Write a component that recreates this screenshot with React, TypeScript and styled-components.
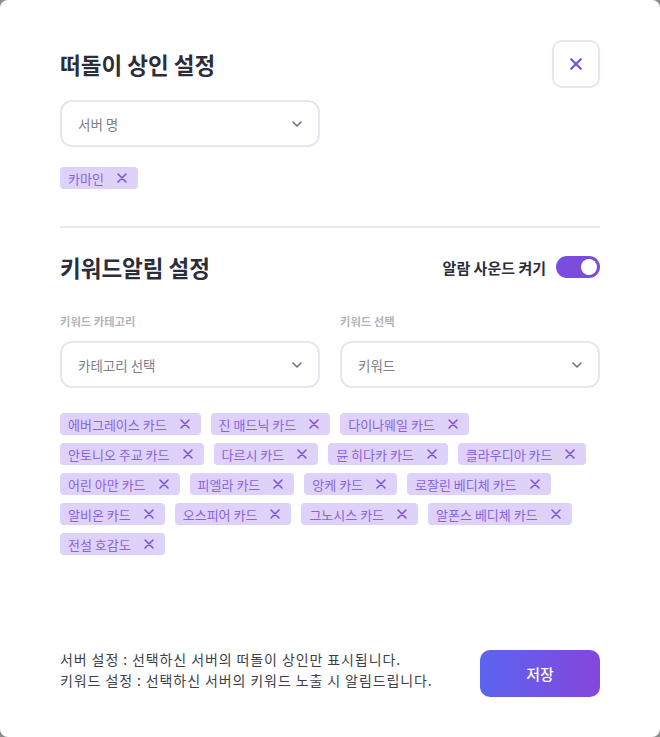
import styled, { createGlobalStyle } from "styled-components";

const GlobalStyle = createGlobalStyle`
  html, body {
    margin: 0;
    padding: 0;
    background: #8c8c8c;
  }
  * {
    box-sizing: border-box;
  }
  body {
    font-family: "Noto Sans CJK KR", "Noto Sans", sans-serif;
  }
`;

const Modal = styled.div`
  width: 660px;
  height: 737px;
  background: #fff;
  border-radius: 8px;
  padding: 40px 60px 40px 60px;
  display: flex;
  flex-direction: column;
`;

const HeaderRow = styled.div`
  display: flex;
  align-items: center;
  justify-content: space-between;
  height: 48px;
`;

const Title = styled.h2`
  margin: 0;
  font-size: 22.5px;
  font-weight: 700;
  color: #2b2d3a;
`;

const CloseButton = styled.button`
  width: 48px;
  height: 48px;
  border: 2px solid #e7e5ef;
  border-radius: 10px;
  background: #fff;
  display: flex;
  align-items: center;
  justify-content: center;
  padding: 0;
  cursor: pointer;
`;

const SelectBox = styled.div<{ $width?: string }>`
  width: ${(p) => p.$width || "100%"};
  height: 47px;
  border: 2px solid #e7e6ee;
  border-radius: 12px;
  display: flex;
  align-items: center;
  justify-content: space-between;
  padding: 0 16px 0 16px;
  font-size: 13.5px;
  color: #7d7f8a;
`;

const ChipList = styled.div<{ $top: number }>`
  display: flex;
  flex-wrap: wrap;
  gap: 8px 10px;
  margin-top: ${(p) => p.$top}px;
`;

const Chip = styled.span`
  display: inline-flex;
  align-items: center;
  height: 22px;
  padding: 0 11px 0 8px;
  border-radius: 4px;
  background: #ded2fa;
  color: #8a63dd;
  font-size: 13px;
  line-height: 1;
  gap: 13px;
`;

const Divider = styled.hr`
  border: none;
  height: 2px;
  background: #e9e8ee;
  margin: 37px 0 0 0;
`;

const SectionHeader = styled.div`
  display: flex;
  align-items: center;
  justify-content: space-between;
  margin-top: 23px;
`;

const ToggleWrap = styled.label`
  display: flex;
  align-items: center;
  gap: 10px;
  font-size: 15px;
  font-weight: 700;
  color: #2b2d3a;
`;

const Toggle = styled.span<{ $on: boolean }>`
  position: relative;
  width: 44px;
  height: 22px;
  border-radius: 11px;
  background: ${(p) => (p.$on ? "#7b4ddc" : "#d5d5dc")};

  &::after {
    content: "";
    position: absolute;
    top: 3px;
    left: ${(p) => (p.$on ? "25px" : "3px")};
    width: 16px;
    height: 16px;
    border-radius: 50%;
    background: #fff;
  }
`;

const FieldGrid = styled.div`
  display: grid;
  grid-template-columns: 1fr 1fr;
  gap: 20px;
  margin-top: 30px;
`;

const Field = styled.div`
  display: flex;
  flex-direction: column;
  gap: 12px;
`;

const FieldLabel = styled.span`
  font-size: 11.3px;
  font-weight: 700;
  color: #b3b4bc;
`;

const Footer = styled.div`
  margin-top: auto;
  display: flex;
  align-items: center;
  justify-content: space-between;
`;

const Notes = styled.div`
  font-size: 14px;
  letter-spacing: 0.9px;
  line-height: 21px;
  color: #3d3f4a;
  margin-top: -9px;
`;

const SaveButton = styled.button`
  width: 120px;
  height: 47px;
  border: none;
  border-radius: 10px;
  background: linear-gradient(90deg, #5b64f0 0%, #8546dc 100%);
  color: #fff;
  font-family: inherit;
  font-size: 15px;
  font-weight: 500;
  cursor: pointer;
  margin-top: -2px;
`;

const XIcon = ({ size = 10, width = 1.5 }: { size?: number; width?: number }) => (
  <svg width={size} height={size} viewBox="0 0 10 10" fill="none">
    <path
      d="M1 1L9 9M9 1L1 9"
      stroke="#7b4ddc"
      strokeWidth={width}
      strokeLinecap="round"
    />
  </svg>
);

const Chevron = () => (
  <svg width="10" height="6" viewBox="0 0 10 6" fill="none">
    <path
      d="M1 1L5 5L9 1"
      stroke="#6f7180"
      strokeWidth="1.6"
      strokeLinecap="round"
      strokeLinejoin="round"
    />
  </svg>
);

const keywords = [
  "에버그레이스 카드",
  "진 매드닉 카드",
  "다이나웨일 카드",
  "안토니오 주교 카드",
  "다르시 카드",
  "뮨 히다카 카드",
  "클라우디아 카드",
  "어린 아만 카드",
  "피엘라 카드",
  "앙케 카드",
  "로잘린 베디체 카드",
  "알비온 카드",
  "오스피어 카드",
  "그노시스 카드",
  "알폰스 베디체 카드",
  "전설 호감도",
];

const App = () => {
  return (
    <>
      <GlobalStyle />
      <Modal>
        <HeaderRow>
          <Title>떠돌이 상인 설정</Title>
          <CloseButton>
            <XIcon size={12} width={1.8} />
          </CloseButton>
        </HeaderRow>
        <div style={{ marginTop: 12 }}>
          <SelectBox $width="260px">
            서버 명
            <Chevron />
          </SelectBox>
        </div>
        <ChipList $top={20}>
          <Chip>
            카마인
            <XIcon />
          </Chip>
        </ChipList>
        <Divider />
        <SectionHeader>
          <Title>키워드알림 설정</Title>
          <ToggleWrap>
            알람 사운드 켜기
            <Toggle $on={true} />
          </ToggleWrap>
        </SectionHeader>
        <FieldGrid>
          <Field>
            <FieldLabel>키워드 카테고리</FieldLabel>
            <SelectBox>
              카테고리 선택
              <Chevron />
            </SelectBox>
          </Field>
          <Field>
            <FieldLabel>키워드 선택</FieldLabel>
            <SelectBox>
              키워드
              <Chevron />
            </SelectBox>
          </Field>
        </FieldGrid>
        <ChipList $top={25}>
          {keywords.map((k) => (
            <Chip key={k}>
              {k}
              <XIcon />
            </Chip>
          ))}
        </ChipList>
        <Footer>
          <Notes>
            서버 설정 : 선택하신 서버의 떠돌이 상인만 표시됩니다.
            <br />
            키워드 설정 : 선택하신 서버의 키워드 노출 시 알림드립니다.
          </Notes>
          <SaveButton>저장</SaveButton>
        </Footer>
      </Modal>
    </>
  );
};

export default App;
